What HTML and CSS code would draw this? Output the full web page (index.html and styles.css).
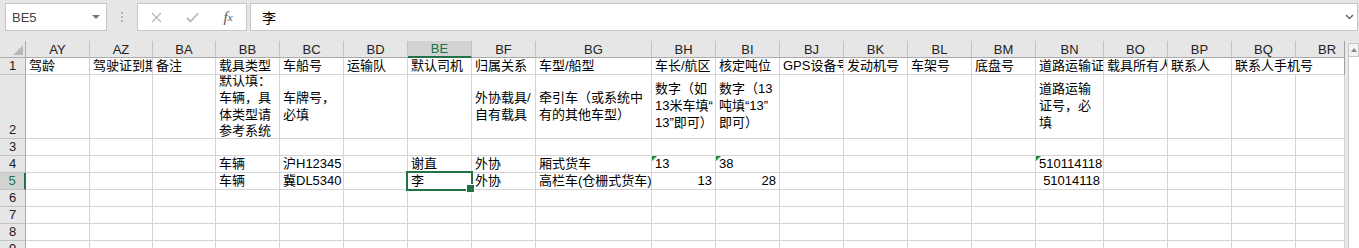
FILE: index.html
```html
<!DOCTYPE html>
<html lang="zh-CN">
<head>
  <meta charset="UTF-8">
  <title>车辆导入模板</title>
  <link rel="stylesheet" href="styles.css">
</head>
<body>
  <!-- Formula bar -->
  <div class="formula-bar">
    <div class="name-box"><span>BE5</span><span class="caret"></span></div>
    <div class="grip"><i></i><i></i><i></i></div>
    <div class="fx-box">
      <span class="fx-btn">
        <svg width="11" height="11" viewBox="0 0 11 11"><path d="M1 1L10 10M10 1L1 10" stroke="#b9b9b9" stroke-width="1.4" fill="none"/></svg>
      </span>
      <span class="fx-btn">
        <svg width="13" height="11" viewBox="0 0 13 11"><path d="M1 6L4.5 9.5L12 1.5" stroke="#b9b9b9" stroke-width="1.8" fill="none"/></svg>
      </span>
      <span class="fx-btn fx"><em>f</em><small>x</small></span>
    </div>
    <div class="formula">
      <span>李</span>
      <svg width="9" height="6" viewBox="0 0 9 6"><path d="M1 1L4.5 4.5L8 1" stroke="#666" stroke-width="1.5" fill="none"/></svg>
    </div>
  </div>

  <!-- Sheet -->
  <div class="sheet">
    <div class="grid">
      <!-- column headers -->
      <div class="h corner"></div>
      <div class="h">AY</div><div class="h">AZ</div><div class="h">BA</div><div class="h">BB</div>
      <div class="h">BC</div><div class="h">BD</div><div class="h on">BE</div><div class="h">BF</div>
      <div class="h">BG</div><div class="h">BH</div><div class="h">BI</div><div class="h">BJ</div>
      <div class="h">BK</div><div class="h">BL</div><div class="h">BM</div><div class="h">BN</div>
      <div class="h">BO</div><div class="h">BP</div><div class="h">BQ</div><div class="h last">BR</div>

      <!-- row 1 -->
      <div class="r">1</div>
      <div class="c">驾龄</div><div class="c">驾驶证到期</div><div class="c">备注</div>
      <div class="c">载具类型</div><div class="c">车船号</div><div class="c">运输队</div>
      <div class="c">默认司机</div><div class="c">归属关系</div><div class="c">车型/船型</div>
      <div class="c">车长/航区</div><div class="c">核定吨位</div><div class="c">GPS设备号</div>
      <div class="c">发动机号</div><div class="c">车架号</div><div class="c">底盘号</div>
      <div class="c">道路运输证号</div><div class="c">载具所有人</div><div class="c">联系人</div>
      <div class="c span2">联系人手机号</div>

      <!-- row 2 -->
      <div class="r">2</div>
      <div class="c"></div><div class="c"></div><div class="c"></div>
      <div class="c w">默认填：<br>车辆，具<br>体类型请<br>参考系统</div>
      <div class="c w">车牌号，<br>必填</div>
      <div class="c"></div><div class="c"></div>
      <div class="c w">外协载具/<br>自有载具</div>
      <div class="c w">牵引车（或系统中<br>有的其他车型）</div>
      <div class="c w">数字（如<br>13米车填“<br>13”即可）</div>
      <div class="c w">数字（13<br>吨填“13”<br>即可）</div>
      <div class="c"></div><div class="c"></div><div class="c"></div><div class="c"></div>
      <div class="c w">道路运输<br>证号，必<br>填</div>
      <div class="c"></div><div class="c"></div><div class="c"></div><div class="c"></div>

      <!-- row 3 -->
      <div class="r">3</div>
      <div class="c"></div><div class="c"></div><div class="c"></div><div class="c"></div><div class="c"></div>
      <div class="c"></div><div class="c"></div><div class="c"></div><div class="c"></div><div class="c"></div>
      <div class="c"></div><div class="c"></div><div class="c"></div><div class="c"></div><div class="c"></div>
      <div class="c"></div><div class="c"></div><div class="c"></div><div class="c"></div><div class="c"></div>

      <!-- row 4 -->
      <div class="r">4</div>
      <div class="c"></div><div class="c"></div><div class="c"></div>
      <div class="c">车辆</div><div class="c">沪H12345</div><div class="c"></div>
      <div class="c">谢直</div><div class="c">外协</div><div class="c">厢式货车</div>
      <div class="c t">13</div><div class="c t">38</div>
      <div class="c"></div><div class="c"></div><div class="c"></div><div class="c"></div>
      <div class="c t">510114118900</div>
      <div class="c"></div><div class="c"></div><div class="c"></div><div class="c"></div>

      <!-- row 5 -->
      <div class="r on">5</div>
      <div class="c"></div><div class="c"></div><div class="c"></div>
      <div class="c">车辆</div><div class="c">冀DL5340</div><div class="c"></div>
      <div class="c sel">李</div><div class="c">外协</div><div class="c">高栏车(仓栅式货车)</div>
      <div class="c n">13</div><div class="c n">28</div>
      <div class="c"></div><div class="c"></div><div class="c"></div><div class="c"></div>
      <div class="c n">51014118</div>
      <div class="c"></div><div class="c"></div><div class="c"></div><div class="c"></div>

      <!-- rows 6-9 -->
      <div class="r">6</div>
      <div class="c"></div><div class="c"></div><div class="c"></div><div class="c"></div><div class="c"></div>
      <div class="c"></div><div class="c"></div><div class="c"></div><div class="c"></div><div class="c"></div>
      <div class="c"></div><div class="c"></div><div class="c"></div><div class="c"></div><div class="c"></div>
      <div class="c"></div><div class="c"></div><div class="c"></div><div class="c"></div><div class="c"></div>
      <div class="r">7</div>
      <div class="c"></div><div class="c"></div><div class="c"></div><div class="c"></div><div class="c"></div>
      <div class="c"></div><div class="c"></div><div class="c"></div><div class="c"></div><div class="c"></div>
      <div class="c"></div><div class="c"></div><div class="c"></div><div class="c"></div><div class="c"></div>
      <div class="c"></div><div class="c"></div><div class="c"></div><div class="c"></div><div class="c"></div>
      <div class="r">8</div>
      <div class="c"></div><div class="c"></div><div class="c"></div><div class="c"></div><div class="c"></div>
      <div class="c"></div><div class="c"></div><div class="c"></div><div class="c"></div><div class="c"></div>
      <div class="c"></div><div class="c"></div><div class="c"></div><div class="c"></div><div class="c"></div>
      <div class="c"></div><div class="c"></div><div class="c"></div><div class="c"></div><div class="c"></div>
      <div class="r">9</div>
      <div class="c"></div><div class="c"></div><div class="c"></div><div class="c"></div><div class="c"></div>
      <div class="c"></div><div class="c"></div><div class="c"></div><div class="c"></div><div class="c"></div>
      <div class="c"></div><div class="c"></div><div class="c"></div><div class="c"></div><div class="c"></div>
      <div class="c"></div><div class="c"></div><div class="c"></div><div class="c"></div><div class="c"></div>
    </div>

    <!-- vertical scrollbar -->
    <div class="vscroll">
      <div class="track">
        <div class="up"></div>
      </div>
    </div>
  </div>
</body>
</html>
```

FILE: styles.css
```css
* { box-sizing: border-box; }
body {
  margin: 0;
  width: 1359px;
  height: 248px;
  overflow: hidden;
  background: #e6e6e6;
  font-family: "Liberation Sans", "Noto Sans CJK SC", sans-serif;
  font-size: 13px;
  color: #000;
}

/* Formula bar */
.formula-bar { display: flex; height: 41px; padding: 3px 1px 0 5px; }
.name-box {
  width: 102px; height: 28px;
  background: #fff; border: 1px solid #c6c6c6;
  display: flex; align-items: center; justify-content: space-between;
  padding: 0 6px; color: #444;
}
.caret { border-left: 4px solid transparent; border-right: 4px solid transparent; border-top: 4px solid #777; }
.grip { width: 30px; height: 28px; display: flex; flex-direction: column; align-items: center; justify-content: center; gap: 2px; }
.grip i { display: block; width: 2px; height: 2px; background: #b4b4b4; }
.fx-box { width: 110px; height: 28px; background: #fff; border: 1px solid #c6c6c6; display: flex; }
.fx-btn { width: 36px; display: flex; align-items: center; justify-content: center; }
.fx { font-family: "Liberation Serif", serif; color: #555; }
.fx em { font-size: 15px; }
.fx small { font-size: 11px; font-style: italic; }
.formula {
  flex: 1; height: 28px; margin-left: 3px;
  background: #fff; border: 1px solid #c6c6c6;
  display: flex; align-items: center; justify-content: space-between;
  padding: 0 3px 0 11px; font-size: 14px;
}

/* Sheet grid */
.sheet { display: flex; }
.grid {
  display: grid;
  grid-template-columns: 26px 64px 63px 63px 64px 64px 64px 64px 64px 116px 64px 64px 64px 64px 64px 64px 68px 64px 64px 64px 49px;
  grid-template-rows: 17px 17px 64px repeat(7, 17px);
  background: #fff;
}
.h {
  background: #e6e6e6; color: #222;
  border-right: 1px solid #c3c3c3; border-bottom: 1px solid #ababab;
  display: flex; align-items: center; justify-content: center;
  overflow: hidden; white-space: nowrap;
}
.h.corner { position: relative; border-right-color: #ababab; }
.h.corner::after {
  content: ""; position: absolute; right: 2px; bottom: 2px;
  border-left: 10px solid transparent; border-bottom: 10px solid #b9b9b9;
}
.h.last { justify-content: flex-start; padding-left: 22px; border-right-color: #a0a0a0; }
.h.on { background: #d2d2d2; color: #217346; border-bottom: 2px solid #217346; }
.r {
  background: #e6e6e6; color: #222;
  border-right: 1px solid #ababab; border-bottom: 1px solid #c3c3c3;
  display: flex; align-items: flex-end; justify-content: center;
  line-height: 16px;
}
.r.on { background: #d2d2d2; color: #217346; border-right: 2px solid #217346; }

.c {
  border-right: 1px solid #d4d4d4; border-bottom: 1px solid #d4d4d4;
  padding: 0 3px;
  display: flex; align-items: flex-end;
  line-height: 16px;
  overflow: hidden; white-space: nowrap;
}
.c:nth-child(21n) { border-right-color: #a0a0a0; }
.span2 { grid-column: span 2; border-right-color: #a0a0a0; }
.w { align-items: center; line-height: 16.7px; padding-right: 0; }
.n { justify-content: flex-end; padding-right: 3px; }

/* number stored as text marker */
.t { position: relative; }
.t::before {
  content: ""; position: absolute; left: 0; top: 0;
  border-top: 5px solid #1f8a3b; border-right: 5px solid transparent;
}

/* active cell */
.sel { position: relative; overflow: visible; }
.sel::after {
  content: ""; position: absolute; z-index: 2;
  left: -2px; top: -2px; right: -2px; bottom: -2px;
  border: 2px solid #217346;
}
.sel::before {
  content: ""; position: absolute; z-index: 3;
  right: -4px; bottom: -4px; width: 7px; height: 7px;
  background: #217346; border: 1px solid #fff;
}

/* vertical scrollbar */
.vscroll { width: 14px; padding: 2px 0 0 3px; background: #e9e9e9; }
.track { height: 300px; background: #fff; border-left: 1px solid #c6c6c6; }
.up { height: 14px; border: 1px solid #c6c6c6; border-left: 0; position: relative; background: #f3f3f3; }
.up::after {
  content: ""; position: absolute; left: 2px; top: 4px;
  border-left: 3px solid transparent; border-right: 3px solid transparent; border-bottom: 4px solid #888;
}
```
